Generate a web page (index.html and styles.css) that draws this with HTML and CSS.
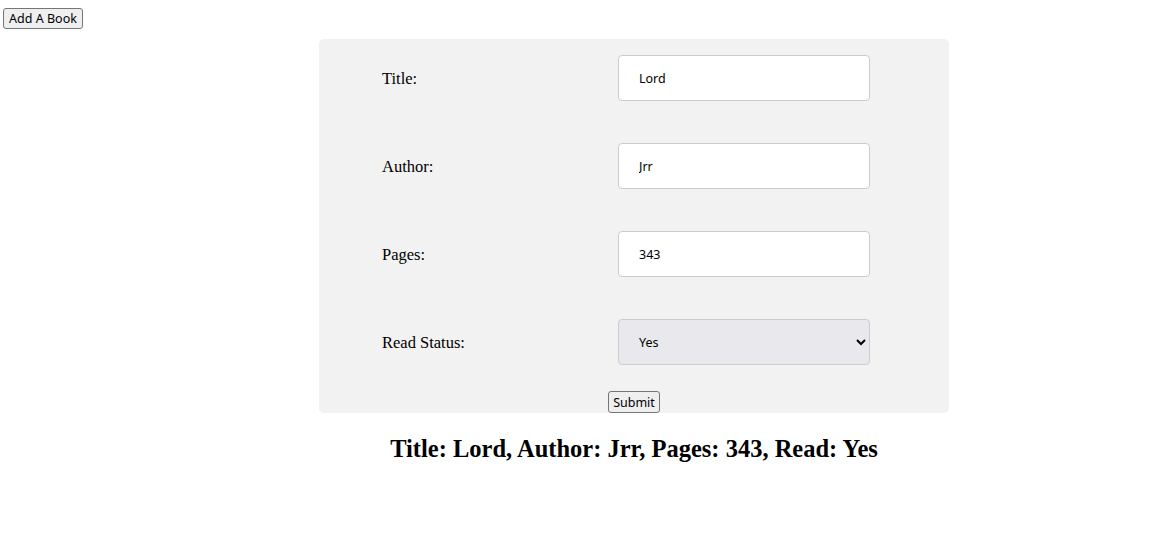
FILE: index.html
```html
<!DOCTYPE html>
<html>
<head>
<meta charset="utf-8">
<link rel="stylesheet" href="styles.css">
</head>
<body>
<button class="btn add-btn">Add A Book</button>
<main class="main">
  <form class="book-form">
    <div class="fields">
      <label class="label" for="title">Title:</label>
      <input class="field" id="title" type="text" value="Lord">
      <label class="label" for="author">Author:</label>
      <input class="field" id="author" type="text" value="Jrr">
      <label class="label" for="pages">Pages:</label>
      <input class="field" id="pages" type="text" value="343">
      <label class="label" for="read">Read Status:</label>
      <select class="field select" id="read">
        <option>Yes</option>
        <option>No</option>
      </select>
    </div>
    <div class="submit-row"><button class="btn" type="button">Submit</button></div>
  </form>
  <h2 class="result">Title: Lord, Author: Jrr, Pages: 343, Read: Yes</h2>
</main>
</body>
</html>
```
FILE: styles.css
```css
html, body {
  margin: 0;
  padding: 0;
  background: #fff;
}
body {
  font-family: "Liberation Serif", "DejaVu Serif", serif;
  color: #000;
}
.btn {
  font-family: "Noto Sans", "Liberation Sans", sans-serif;
  font-size: 12.5px;
  line-height: 17px;
  padding: 1px 4px;
  border: 1px solid #767676;
  border-radius: 3px;
  background: #efeff0;
  color: #000;
  height: 21px;
  box-sizing: border-box;
}
.add-btn {
  display: block;
  margin: 8px 0 0 3px;
  width: 80px;
}
.main {
  margin-left: 319px;
  width: 630px;
  margin-top: 10px;
}
.book-form {
  background: #f2f2f2;
  border-radius: 5px;
  padding: 16px 0 0 63px;
  height: 374px;
  box-sizing: border-box;
  display: flex;
  flex-direction: column;
}
.fields {
  display: grid;
  grid-template-columns: 236px 252px;
  row-gap: 42px;
  align-items: center;
}
.label {
  font-size: 16.5px;
  position: relative;
  top: 1px;
}
.field {
  height: 46px;
  box-sizing: border-box;
  border: 1px solid #cccccc;
  border-radius: 4px;
  background: #fff;
  padding: 0 0 0 20px;
  font-family: "Noto Sans", "Liberation Sans", sans-serif;
  font-size: 12.5px;
  color: #000;
  outline: none;
}
.select {
  background: #e9e9ed;
  padding-left: 16px;
}
.submit-row {
  margin-top: 26px;
  margin-left: -63px;
  display: flex;
  justify-content: center;
}
.submit-row .btn {
  height: 22px;
  width: 52px;
}
.result {
  margin: 22px 0 0;
  text-align: center;
  font-size: 24.5px;
  font-weight: bold;
  line-height: 28px;
}
```
